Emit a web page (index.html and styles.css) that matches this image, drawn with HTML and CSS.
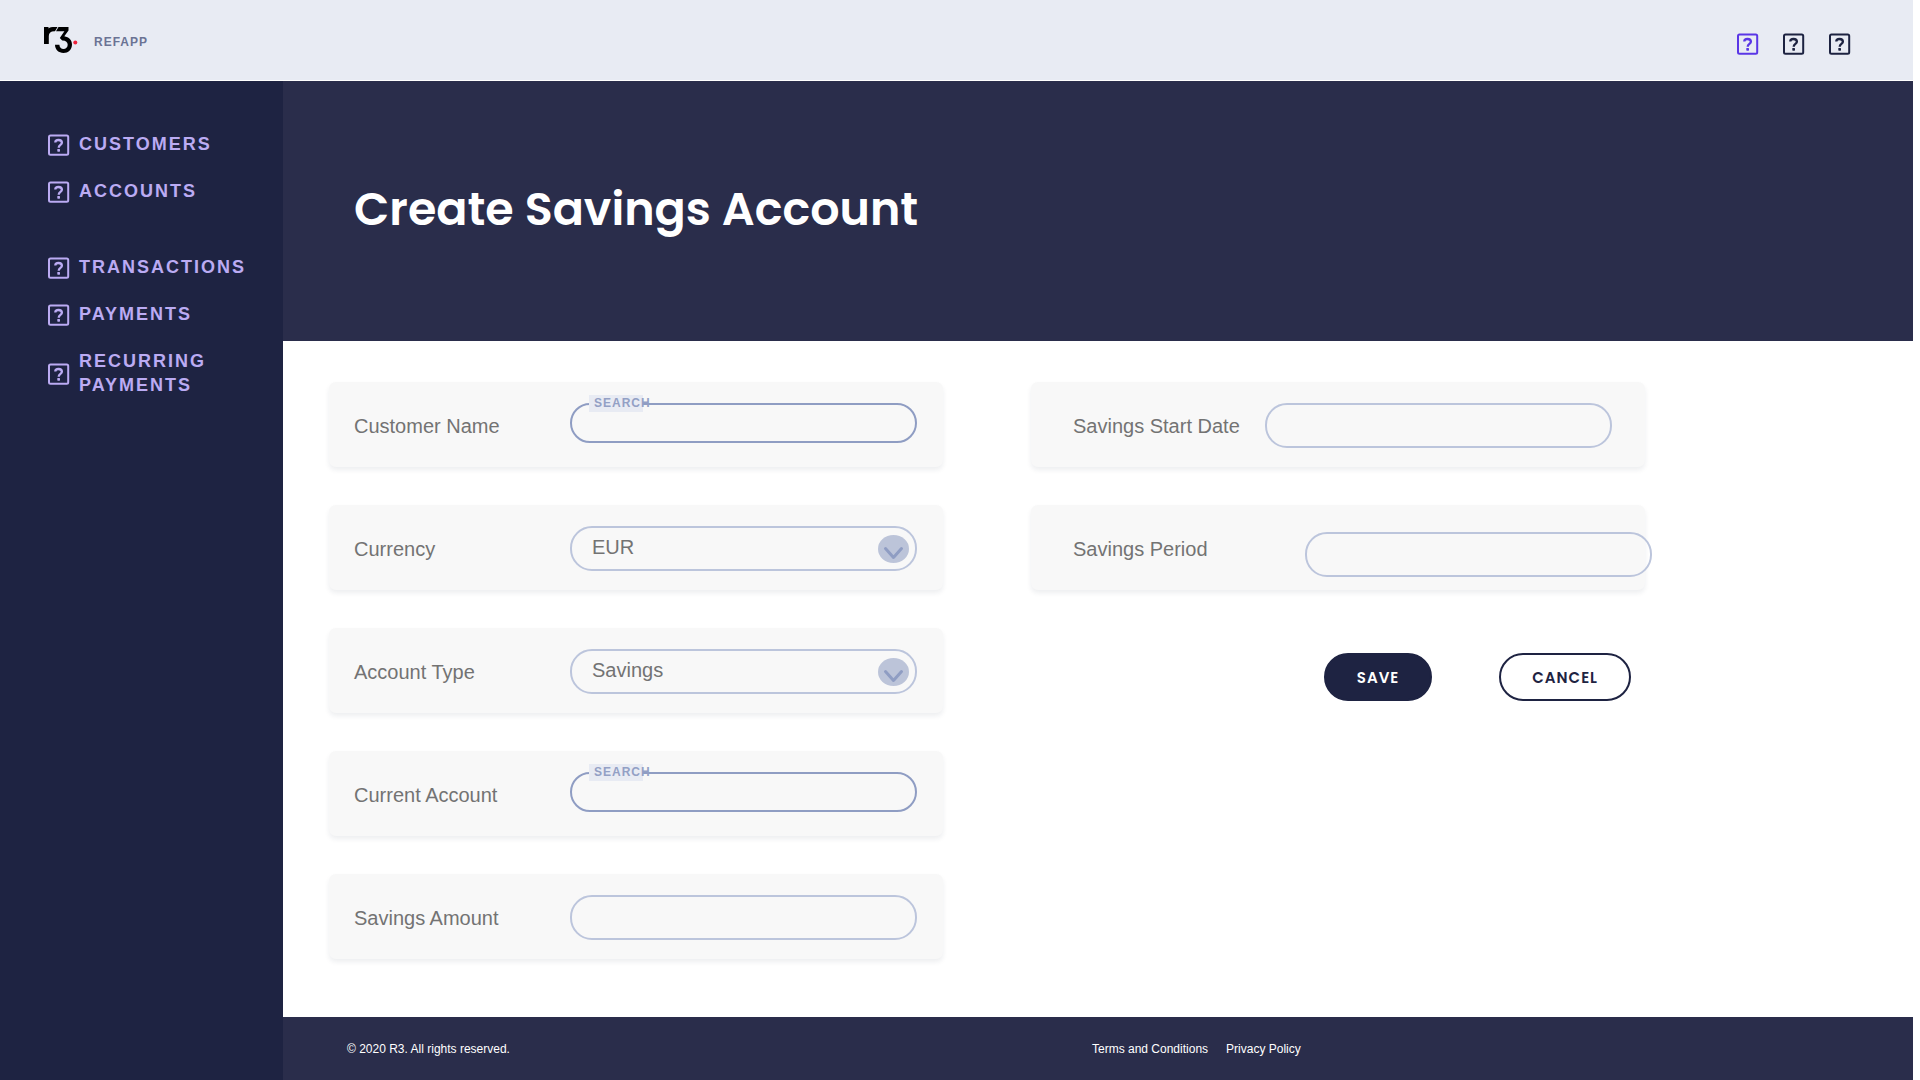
FILE: index.html
```html
<!DOCTYPE html>
<html lang="en">
<head>
<meta charset="utf-8">
<meta name="viewport" content="width=device-width, initial-scale=1">
<title>Create Savings Account</title>
<link rel="stylesheet" href="styles.css">
</head>
<body>
<svg class="sprite" aria-hidden="true">
  <symbol id="help" viewBox="0 0 24 24">
    <rect x="3" y="3.5" width="19.200" height="19.200" rx="1.500" fill="none" stroke="currentColor" stroke-width="2"/>
    <path d="M9.300 10.600C9.300 8.900 10.500 8 12.500 8s3.400.9 3.400 2.700c0 2.300-3.200 2.200-3.200 5" fill="none" stroke="currentColor" stroke-width="2.300"/>
    <rect x="11.300" y="17" width="2.700" height="2.700" rx=".6" fill="currentColor"/>
  </symbol>
  <symbol id="chevron" viewBox="0 0 31 28">
    <ellipse cx="15.5" cy="14" rx="15.5" ry="14" fill="#bcc4d9"/>
    <path d="M7.5 13.5l8 9 8-9" fill="none" stroke="#8f9dc3" stroke-width="3" stroke-linecap="round" stroke-linejoin="round"/>
  </symbol>
</svg>

<header class="topbar">
  <a class="brand" href="#">
    <svg class="brand-logo" viewBox="0 0 36 28" role="img" aria-label="R3">
      <path d="M0 1h4.500v1.500C6 1.200 8 .8 13.500 1L11 5.200C7 5 4.800 6.500 4.800 10v8H0z"/>
      <path d="M14.500 1H24.500v3.400L20.300 10.300C25 11 28 14.300 28 18.500c0 5-3.800 8.500-8.500 8.500C14.700 27 11 23.700 11 18.800h4.400c0 2.400 1.700 4.200 4.100 4.200s4.200-1.900 4.200-4.300c0-2.700-2.200-4.500-5.500-4.300L15.800 12l4.600-6.800h-8.400z"/>
      <circle cx="31.300" cy="16.500" r="2" fill="#f0233c"/>
    </svg>
    <span class="brand-name">REFAPP</span>
  </a>
  <nav class="topbar-actions" aria-label="Account">
    <a class="action action-active" href="#" aria-label="Help"><svg class="icon"><use href="#help"/></svg></a>
    <a class="action" href="#" aria-label="Notifications"><svg class="icon"><use href="#help"/></svg></a>
    <a class="action" href="#" aria-label="Profile"><svg class="icon"><use href="#help"/></svg></a>
  </nav>
</header>

<div class="shell">
  <nav class="sidebar" aria-label="Main">
    <ul class="nav-group">
      <li><a class="nav-link" href="#"><svg class="icon"><use href="#help"/></svg><span>CUSTOMERS</span></a></li>
      <li><a class="nav-link" href="#"><svg class="icon"><use href="#help"/></svg><span>ACCOUNTS</span></a></li>
    </ul>
    <ul class="nav-group">
      <li><a class="nav-link" href="#"><svg class="icon"><use href="#help"/></svg><span>TRANSACTIONS</span></a></li>
      <li><a class="nav-link" href="#"><svg class="icon"><use href="#help"/></svg><span>PAYMENTS</span></a></li>
      <li><a class="nav-link" href="#"><svg class="icon"><use href="#help"/></svg><span>RECURRING PAYMENTS</span></a></li>
    </ul>
  </nav>

  <div class="page">
    <div class="hero"><h1 class="hero-title">Create Savings Account</h1></div>

    <main class="content">
      <form class="form">
        <div class="column">
          <div class="card">
            <label class="card-label" for="customer">Customer Name</label>
            <div class="field">
              <input class="control control-search" id="customer" type="text">
              <span class="tag">SEARCH</span>
            </div>
          </div>
          <div class="card">
            <label class="card-label" for="currency">Currency</label>
            <div class="field">
              <select class="control control-select" id="currency"><option>EUR</option></select>
              <svg class="chevron" aria-hidden="true"><use href="#chevron"/></svg>
            </div>
          </div>
          <div class="card">
            <label class="card-label" for="type">Account Type</label>
            <div class="field">
              <select class="control control-select" id="type"><option>Savings</option></select>
              <svg class="chevron" aria-hidden="true"><use href="#chevron"/></svg>
            </div>
          </div>
          <div class="card">
            <label class="card-label" for="current">Current Account</label>
            <div class="field">
              <input class="control control-search" id="current" type="text">
              <span class="tag">SEARCH</span>
            </div>
          </div>
          <div class="card">
            <label class="card-label" for="amount">Savings Amount</label>
            <div class="field"><input class="control" id="amount" type="text"></div>
          </div>
        </div>

        <div class="column">
          <div class="card card-date">
            <label class="card-label" for="start">Savings Start Date</label>
            <div class="field"><input class="control" id="start" type="text"></div>
          </div>
          <div class="card card-period">
            <label class="card-label" for="period">Savings Period</label>
            <div class="field"><input class="control" id="period" type="text"></div>
          </div>
          <div class="buttons">
            <button class="button button-primary" type="submit">SAVE</button>
            <button class="button" type="button">CANCEL</button>
          </div>
        </div>
      </form>
    </main>

    <footer class="footer">
      <p class="copyright">© 2020 R3. All rights reserved.</p>
      <nav class="footer-links" aria-label="Legal">
        <a href="#">Terms and Conditions</a>
        <a href="#">Privacy Policy</a>
      </nav>
    </footer>
  </div>
</div>
</body>
</html>
```
FILE: styles.css
```css
* {
  box-sizing: border-box;
}

body {
  display: flex;
  flex-direction: column;
  min-height: 100vh;
  margin: 0;
  padding-right: 7px;
  background: #fff;
  font-family: "Liberation Sans", Arial, sans-serif;
}

a {
  color: inherit;
  text-decoration: none;
}

.sprite {
  display: none;
}

.icon {
  display: block;
  flex: none;
  width: 24px;
  height: 24px;
}

/* Top bar */
.topbar {
  display: flex;
  justify-content: space-between;
  align-items: center;
  height: 81px;
  padding: 0 62px 0 44px;
  border-bottom: 1px solid #fff;
  background: #e8ebf3;
}

.brand {
  display: flex;
  align-items: center;
  gap: 14px;
}

.brand-logo {
  width: 36px;
  height: 28px;
}

.brand-name {
  padding-top: 4px;
  color: #6b7394;
  font-size: 12px;
  font-weight: 700;
  line-height: 16px;
  letter-spacing: 1px;
}

.topbar-actions {
  display: flex;
  gap: 22px;
  padding-top: 6px;
}

.action {
  color: #1c2240;
}

.action-active {
  color: #5a36e6;
}

/* Sidebar */
.shell {
  display: flex;
  flex: 1;
}

.sidebar {
  display: flex;
  flex: 0 0 283px;
  flex-direction: column;
  gap: 52px;
  padding: 51px 28px 51px 46px;
  background: #1e2342;
}

.nav-group {
  display: flex;
  flex-direction: column;
  gap: 23px;
  margin: 0;
  padding: 0;
  list-style: none;
}

.nav-link {
  display: flex;
  align-items: center;
  gap: 9px;
  color: #bbabf3;
  font-size: 18px;
  font-weight: 700;
  line-height: 24px;
  letter-spacing: 2px;
}

/* Page */
.page {
  display: flex;
  flex: 1;
  flex-direction: column;
  min-width: 0;
}

.hero {
  display: flex;
  align-items: center;
  height: 260px;
  padding: 0 71px 4px;
  background: #2a2d4b;
}

.hero-title {
  margin: 0;
  color: #fff;
  font-family: Poppins, Inter, sans-serif;
  font-size: 46px;
  font-weight: 600;
  line-height: 72px;
}

.content {
  flex: 1;
  padding: 41px 46px;
}

.form {
  display: grid;
  grid-template-columns: repeat(2, minmax(0, 614px));
  gap: 88px;
}

.column {
  display: flex;
  flex-direction: column;
  gap: 38px;
}

.card {
  display: flex;
  align-items: flex-start;
  height: 85px;
  padding: 21px 26px 0 25px;
  border-radius: 7px;
  background: #f8f8f8;
  box-shadow: 0 3px 5px rgba(30, 35, 66, 0.08);
}

.card-label {
  flex: 0 0 216px;
  padding-top: 11px;
  color: #737373;
  font-size: 20px;
  line-height: 24px;
}

.card-date {
  padding-right: 33px;
  padding-left: 42px;
}

.card-date .card-label {
  flex-basis: 192px;
}

.card-period {
  padding-right: 0;
  padding-left: 42px;
}

.card-period .card-label {
  flex-basis: 232px;
}

.card-period .field {
  margin-top: 6px;
  margin-right: -7px;
}

.field {
  position: relative;
  flex: 1;
}

.control {
  display: block;
  width: 100%;
  height: 45px;
  padding: 0 20px;
  border: 2px solid #bcc5dc;
  border-radius: 22px;
  background: transparent;
  color: #737373;
  font-family: inherit;
  font-size: 20px;
  line-height: 24px;
}

.control-search {
  height: 40px;
  border-color: #8f9dc3;
  border-radius: 20px;
}

.control-select {
  padding-bottom: 4px;
  appearance: none;
}

/* Tag sitting on the top border of a search field */
.tag {
  position: absolute;
  top: -8px;
  left: 19px;
  width: 54px;
  padding-left: 5px;
  background: #e8ebf3;
  color: #93a0c5;
  font-size: 12px;
  font-weight: 700;
  line-height: 17px;
  letter-spacing: 1px;
  white-space: nowrap;
}

.chevron {
  position: absolute;
  top: 9px;
  right: 8px;
  width: 31px;
  height: 28px;
  pointer-events: none;
}

.buttons {
  display: flex;
  justify-content: flex-end;
  gap: 67px;
  padding: 25px 14px 0 0;
}

.button {
  height: 48px;
  padding: 0 31px;
  border: 2px solid #1e2342;
  border-radius: 24px;
  background: #fff;
  color: #1e2342;
  font-family: Poppins, Inter, sans-serif;
  font-size: 15px;
  font-weight: 600;
  letter-spacing: 1px;
}

.button-primary {
  background: #1e2342;
  color: #fff;
}

/* Footer */
.footer {
  display: grid;
  grid-template-columns: 745px 1fr;
  align-items: center;
  height: 63px;
  padding: 0 64px;
  background: #2a2d4b;
  color: #fff;
  font-size: 12px;
  line-height: 16px;
}

.copyright {
  margin: 0;
}

.footer-links {
  display: flex;
  gap: 18px;
}
```
